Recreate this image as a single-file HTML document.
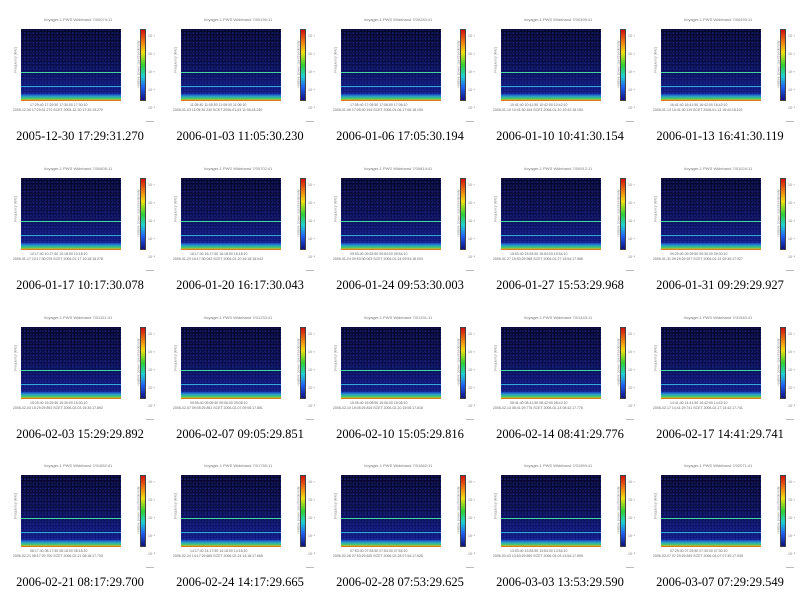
<!DOCTYPE html>
<html><head><meta charset="utf-8"><style>
body{margin:0;width:800px;height:596px;background:#fff;position:relative;overflow:hidden;font-family:"Liberation Sans",sans-serif}
.c{position:absolute;width:160px;height:149px}
.t{position:absolute;top:17px;left:28px;width:100px;font-size:4px;color:#777;white-space:nowrap;text-align:center}
.p{position:absolute;left:21px;top:29px;width:100px;height:72px;
background:
radial-gradient(circle at 30% 40%,rgba(50,70,200,.5) 0 0.6px,transparent 0.7px) 0 0/3px 3px,
radial-gradient(circle at 70% 60%,rgba(40,60,190,.45) 0 0.6px,transparent 0.7px) 1px 1px/4px 5px,
linear-gradient(#06062a,#0a0c48 45%,#10187a 85%,#1a2a9a)}
.g{position:absolute;left:21px;width:100px;height:1.3px}
.l1{top:72px;background:#40d8a0}
.l2{top:86px;background:#30a8d8}
.b{position:absolute;left:21px;top:94px;width:100px;height:7px;background:linear-gradient(#1a40c0,#2aa0c8 35%,#40c870 65%,#d0b020 85%,#e05020)}
.cb{position:absolute;left:140px;top:29px;width:6px;height:72px;border:0.5px solid #444;box-sizing:border-box;
background:linear-gradient(#d01010,#f08010 18%,#f0e010 32%,#30d030 50%,#20d0d0 66%,#2060f0 82%,#101080)}
.yt{position:absolute;left:3px;top:58px;font-size:3.5px;color:#888;transform:rotate(-90deg);white-space:nowrap}
.rt{position:absolute;left:115px;top:62px;font-size:3.5px;color:#888;transform:rotate(-90deg);white-space:nowrap}
.cl{position:absolute;left:148px;top:27px;font-size:3.5px;color:#777;line-height:18px}
.x1{position:absolute;left:30px;top:103px;font-size:3.5px;color:#666;white-space:nowrap}
.x2{position:absolute;left:13px;top:108px;font-size:3.5px;color:#666;white-space:nowrap}
.m{position:absolute;left:146px;top:121px;width:8px;height:1px;background:#bbb}
.d{position:absolute;top:129px;left:0;width:160px;text-align:center;font-family:"Liberation Serif",serif;font-size:12.5px;line-height:14px;color:#000;white-space:nowrap}
</style></head><body>

<div class="c" style="left:0;top:0"><div class="t">Voyager-1 PWS Wideband  7/00074:11</div><div class="p"></div><div class="g l1"></div><div class="g l2"></div><div class="b"></div><div class="cb"></div><div class="cl">10⁻¹<br>10⁻²<br>10⁻³<br>10⁻⁴<br>10⁻⁵</div><div class="yt">Frequency [kHz]</div><div class="rt">relative power spectral density</div><div class="x1">17:29:40   17:29:50   17:30:00   17:30:10</div><div class="x2">2005-12-30 17:29:31.270    SCET    2005-12-30 17:30:19.270</div><div class="m"></div><div class="d">2005-12-30 17:29:31.270</div></div>
<div class="c" style="left:160px;top:0"><div class="t">Voyager-1 PWS Wideband  7/00190:11</div><div class="p"></div><div class="g l1"></div><div class="g l2"></div><div class="b"></div><div class="cb"></div><div class="cl">10⁻¹<br>10⁻²<br>10⁻³<br>10⁻⁴<br>10⁻⁵</div><div class="yt">Frequency [kHz]</div><div class="rt">relative power spectral density</div><div class="x1">11:05:40   11:05:50   11:06:00   11:06:10</div><div class="x2">2006-01-03 11:05:30.230    SCET    2006-01-03 11:06:18.230</div><div class="m"></div><div class="d">2006-01-03 11:05:30.230</div></div>
<div class="c" style="left:320px;top:0"><div class="t">Voyager-1 PWS Wideband  7/00283:41</div><div class="p"></div><div class="g l1"></div><div class="g l2"></div><div class="b"></div><div class="cb"></div><div class="cl">10⁻¹<br>10⁻²<br>10⁻³<br>10⁻⁴<br>10⁻⁵</div><div class="yt">Frequency [kHz]</div><div class="rt">relative power spectral density</div><div class="x1">17:05:40   17:05:50   17:06:00   17:06:10</div><div class="x2">2006-01-06 17:05:30.194    SCET    2006-01-06 17:06:18.194</div><div class="m"></div><div class="d">2006-01-06 17:05:30.194</div></div>
<div class="c" style="left:480px;top:0"><div class="t">Voyager-1 PWS Wideband  7/00395:41</div><div class="p"></div><div class="g l1"></div><div class="g l2"></div><div class="b"></div><div class="cb"></div><div class="cl">10⁻¹<br>10⁻²<br>10⁻³<br>10⁻⁴<br>10⁻⁵</div><div class="yt">Frequency [kHz]</div><div class="rt">relative power spectral density</div><div class="x1">10:41:40   10:41:50   10:42:00   10:42:10</div><div class="x2">2006-01-10 10:41:30.154    SCET    2006-01-10 10:42:18.154</div><div class="m"></div><div class="d">2006-01-10 10:41:30.154</div></div>
<div class="c" style="left:640px;top:0"><div class="t">Voyager-1 PWS Wideband  7/00493:11</div><div class="p"></div><div class="g l1"></div><div class="g l2"></div><div class="b"></div><div class="cb"></div><div class="cl">10⁻¹<br>10⁻²<br>10⁻³<br>10⁻⁴<br>10⁻⁵</div><div class="yt">Frequency [kHz]</div><div class="rt">relative power spectral density</div><div class="x1">16:41:40   16:41:50   16:42:00   16:42:10</div><div class="x2">2006-01-13 16:41:30.119    SCET    2006-01-13 16:42:18.119</div><div class="m"></div><div class="d">2006-01-13 16:41:30.119</div></div>

<div class="c" style="left:0;top:149px"><div class="t">Voyager-1 PWS Wideband  7/00605:11</div><div class="p"></div><div class="g l1"></div><div class="g l2"></div><div class="b"></div><div class="cb"></div><div class="cl">10⁻¹<br>10⁻²<br>10⁻³<br>10⁻⁴<br>10⁻⁵</div><div class="yt">Frequency [kHz]</div><div class="rt">relative power spectral density</div><div class="x1">10:17:40   10:17:50   10:18:00   10:18:10</div><div class="x2">2006-01-17 10:17:30.078    SCET    2006-01-17 10:18:18.078</div><div class="m"></div><div class="d">2006-01-17 10:17:30.078</div></div>
<div class="c" style="left:160px;top:149px"><div class="t">Voyager-1 PWS Wideband  7/00702:41</div><div class="p"></div><div class="g l1"></div><div class="g l2"></div><div class="b"></div><div class="cb"></div><div class="cl">10⁻¹<br>10⁻²<br>10⁻³<br>10⁻⁴<br>10⁻⁵</div><div class="yt">Frequency [kHz]</div><div class="rt">relative power spectral density</div><div class="x1">16:17:40   16:17:50   16:18:00   16:18:10</div><div class="x2">2006-01-20 16:17:30.043    SCET    2006-01-20 16:18:18.043</div><div class="m"></div><div class="d">2006-01-20 16:17:30.043</div></div>
<div class="c" style="left:320px;top:149px"><div class="t">Voyager-1 PWS Wideband  7/00814:41</div><div class="p"></div><div class="g l1"></div><div class="g l2"></div><div class="b"></div><div class="cb"></div><div class="cl">10⁻¹<br>10⁻²<br>10⁻³<br>10⁻⁴<br>10⁻⁵</div><div class="yt">Frequency [kHz]</div><div class="rt">relative power spectral density</div><div class="x1">09:53:40   09:53:50   09:54:00   09:54:10</div><div class="x2">2006-01-24 09:53:30.003    SCET    2006-01-24 09:54:18.003</div><div class="m"></div><div class="d">2006-01-24 09:53:30.003</div></div>
<div class="c" style="left:480px;top:149px"><div class="t">Voyager-1 PWS Wideband  7/00912:11</div><div class="p"></div><div class="g l1"></div><div class="g l2"></div><div class="b"></div><div class="cb"></div><div class="cl">10⁻¹<br>10⁻²<br>10⁻³<br>10⁻⁴<br>10⁻⁵</div><div class="yt">Frequency [kHz]</div><div class="rt">relative power spectral density</div><div class="x1">15:53:40   15:53:50   15:54:00   15:54:10</div><div class="x2">2006-01-27 15:53:29.968    SCET    2006-01-27 15:54:17.968</div><div class="m"></div><div class="d">2006-01-27 15:53:29.968</div></div>
<div class="c" style="left:640px;top:149px"><div class="t">Voyager-1 PWS Wideband  7/01024:11</div><div class="p"></div><div class="g l1"></div><div class="g l2"></div><div class="b"></div><div class="cb"></div><div class="cl">10⁻¹<br>10⁻²<br>10⁻³<br>10⁻⁴<br>10⁻⁵</div><div class="yt">Frequency [kHz]</div><div class="rt">relative power spectral density</div><div class="x1">09:29:40   09:29:50   09:30:00   09:30:10</div><div class="x2">2006-01-31 09:29:29.927    SCET    2006-01-31 09:30:17.927</div><div class="m"></div><div class="d">2006-01-31 09:29:29.927</div></div>

<div class="c" style="left:0;top:298px"><div class="t">Voyager-1 PWS Wideband  7/01121:41</div><div class="p"></div><div class="g l1"></div><div class="g l2"></div><div class="b"></div><div class="cb"></div><div class="cl">10⁻¹<br>10⁻²<br>10⁻³<br>10⁻⁴<br>10⁻⁵</div><div class="yt">Frequency [kHz]</div><div class="rt">relative power spectral density</div><div class="x1">15:29:40   15:29:50   15:30:00   15:30:10</div><div class="x2">2006-02-03 15:29:29.892    SCET    2006-02-03 15:30:17.892</div><div class="m"></div><div class="d">2006-02-03 15:29:29.892</div></div>
<div class="c" style="left:160px;top:298px"><div class="t">Voyager-1 PWS Wideband  7/01233:41</div><div class="p"></div><div class="g l1"></div><div class="g l2"></div><div class="b"></div><div class="cb"></div><div class="cl">10⁻¹<br>10⁻²<br>10⁻³<br>10⁻⁴<br>10⁻⁵</div><div class="yt">Frequency [kHz]</div><div class="rt">relative power spectral density</div><div class="x1">09:05:40   09:05:50   09:06:00   09:06:10</div><div class="x2">2006-02-07 09:05:29.851    SCET    2006-02-07 09:06:17.851</div><div class="m"></div><div class="d">2006-02-07 09:05:29.851</div></div>
<div class="c" style="left:320px;top:298px"><div class="t">Voyager-1 PWS Wideband  7/01331:11</div><div class="p"></div><div class="g l1"></div><div class="g l2"></div><div class="b"></div><div class="cb"></div><div class="cl">10⁻¹<br>10⁻²<br>10⁻³<br>10⁻⁴<br>10⁻⁵</div><div class="yt">Frequency [kHz]</div><div class="rt">relative power spectral density</div><div class="x1">15:05:40   15:05:50   15:06:00   15:06:10</div><div class="x2">2006-02-10 15:05:29.816    SCET    2006-02-10 15:06:17.816</div><div class="m"></div><div class="d">2006-02-10 15:05:29.816</div></div>
<div class="c" style="left:480px;top:298px"><div class="t">Voyager-1 PWS Wideband  7/01443:11</div><div class="p"></div><div class="g l1"></div><div class="g l2"></div><div class="b"></div><div class="cb"></div><div class="cl">10⁻¹<br>10⁻²<br>10⁻³<br>10⁻⁴<br>10⁻⁵</div><div class="yt">Frequency [kHz]</div><div class="rt">relative power spectral density</div><div class="x1">08:41:40   08:41:50   08:42:00   08:42:10</div><div class="x2">2006-02-14 08:41:29.776    SCET    2006-02-14 08:42:17.776</div><div class="m"></div><div class="d">2006-02-14 08:41:29.776</div></div>
<div class="c" style="left:640px;top:298px"><div class="t">Voyager-1 PWS Wideband  7/01540:41</div><div class="p"></div><div class="g l1"></div><div class="g l2"></div><div class="b"></div><div class="cb"></div><div class="cl">10⁻¹<br>10⁻²<br>10⁻³<br>10⁻⁴<br>10⁻⁵</div><div class="yt">Frequency [kHz]</div><div class="rt">relative power spectral density</div><div class="x1">14:41:40   14:41:50   14:42:00   14:42:10</div><div class="x2">2006-02-17 14:41:29.741    SCET    2006-02-17 14:42:17.741</div><div class="m"></div><div class="d">2006-02-17 14:41:29.741</div></div>

<div class="c" style="left:0;top:446px"><div class="t">Voyager-1 PWS Wideband  7/01652:41</div><div class="p"></div><div class="g l1"></div><div class="g l2"></div><div class="b"></div><div class="cb"></div><div class="cl">10⁻¹<br>10⁻²<br>10⁻³<br>10⁻⁴<br>10⁻⁵</div><div class="yt">Frequency [kHz]</div><div class="rt">relative power spectral density</div><div class="x1">08:17:40   08:17:50   08:18:00   08:18:10</div><div class="x2">2006-02-21 08:17:29.700    SCET    2006-02-21 08:18:17.700</div><div class="m"></div><div class="d">2006-02-21 08:17:29.700</div></div>
<div class="c" style="left:160px;top:446px"><div class="t">Voyager-1 PWS Wideband  7/01750:11</div><div class="p"></div><div class="g l1"></div><div class="g l2"></div><div class="b"></div><div class="cb"></div><div class="cl">10⁻¹<br>10⁻²<br>10⁻³<br>10⁻⁴<br>10⁻⁵</div><div class="yt">Frequency [kHz]</div><div class="rt">relative power spectral density</div><div class="x1">14:17:40   14:17:50   14:18:00   14:18:10</div><div class="x2">2006-02-24 14:17:29.665    SCET    2006-02-24 14:18:17.665</div><div class="m"></div><div class="d">2006-02-24 14:17:29.665</div></div>
<div class="c" style="left:320px;top:446px"><div class="t">Voyager-1 PWS Wideband  7/01862:11</div><div class="p"></div><div class="g l1"></div><div class="g l2"></div><div class="b"></div><div class="cb"></div><div class="cl">10⁻¹<br>10⁻²<br>10⁻³<br>10⁻⁴<br>10⁻⁵</div><div class="yt">Frequency [kHz]</div><div class="rt">relative power spectral density</div><div class="x1">07:53:40   07:53:50   07:54:00   07:54:10</div><div class="x2">2006-02-28 07:53:29.625    SCET    2006-02-28 07:54:17.625</div><div class="m"></div><div class="d">2006-02-28 07:53:29.625</div></div>
<div class="c" style="left:480px;top:446px"><div class="t">Voyager-1 PWS Wideband  7/01959:41</div><div class="p"></div><div class="g l1"></div><div class="g l2"></div><div class="b"></div><div class="cb"></div><div class="cl">10⁻¹<br>10⁻²<br>10⁻³<br>10⁻⁴<br>10⁻⁵</div><div class="yt">Frequency [kHz]</div><div class="rt">relative power spectral density</div><div class="x1">13:53:40   13:53:50   13:54:00   13:54:10</div><div class="x2">2006-03-03 13:53:29.590    SCET    2006-03-03 13:54:17.590</div><div class="m"></div><div class="d">2006-03-03 13:53:29.590</div></div>
<div class="c" style="left:640px;top:446px"><div class="t">Voyager-1 PWS Wideband  7/02071:41</div><div class="p"></div><div class="g l1"></div><div class="g l2"></div><div class="b"></div><div class="cb"></div><div class="cl">10⁻¹<br>10⁻²<br>10⁻³<br>10⁻⁴<br>10⁻⁵</div><div class="yt">Frequency [kHz]</div><div class="rt">relative power spectral density</div><div class="x1">07:29:40   07:29:50   07:30:00   07:30:10</div><div class="x2">2006-03-07 07:29:29.549    SCET    2006-03-07 07:30:17.549</div><div class="m"></div><div class="d">2006-03-07 07:29:29.549</div></div>

</body></html>
